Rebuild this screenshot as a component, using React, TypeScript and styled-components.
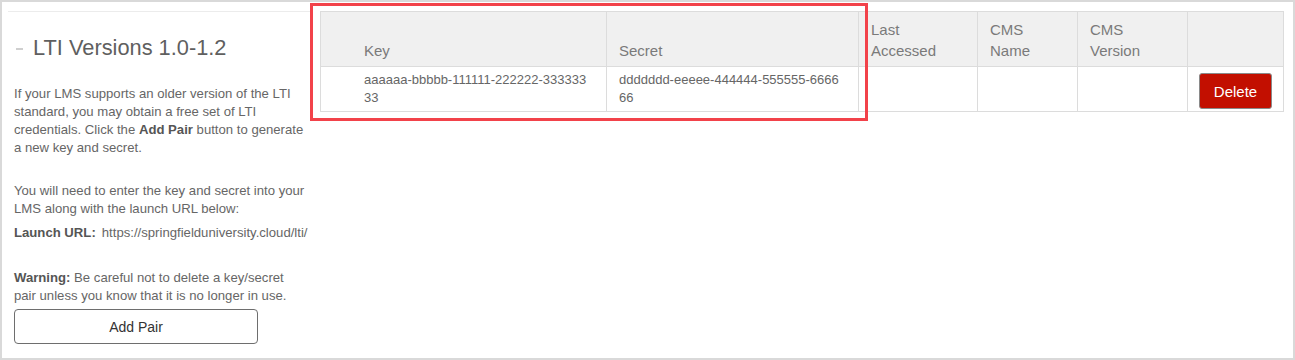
import styled, { createGlobalStyle } from "styled-components";

const GlobalStyle = createGlobalStyle`
  html, body {
    margin: 0;
    padding: 0;
    background: #ffffff;
  }
  body {
    font-family: "Liberation Sans", Arial, sans-serif;
  }
`;

const Frame = styled.div`
  position: relative;
  box-sizing: border-box;
  width: 1295px;
  height: 360px;
  border: 2px solid #d9d9d9;
  padding: 9px 9px 0 6px;
  display: flex;
  gap: 10px;
  background: #fff;
`;

const SidePanel = styled.section`
  box-sizing: border-box;
  width: 302px;
  flex: none;
  border-top: 1px solid #ececec;
  padding: 0 3px 0 6px;
  color: #666;
  font-size: 13.15px;
  line-height: 18px;
`;

const Title = styled.h2`
  margin: 24px 0 25px;
  font-size: 21.8px;
  font-weight: normal;
  line-height: 24px;
  color: #5f5f5f;
  display: flex;
  align-items: center;
`;

const Dash = styled.span`
  display: inline-block;
  width: 7px;
  height: 2px;
  background: #cfcfcf;
  margin: 2px 10px 0 2px;
`;

const Para = styled.p<{ $gap?: number }>`
  margin: 0 0 ${(p) => p.$gap ?? 0}px;
`;

const UrlRow = styled.div`
  display: flex;
  gap: 6px;
  margin-bottom: 27px;
  white-space: nowrap;
`;

const Strong = styled.b`
  color: #555;
`;

const AddButton = styled.button`
  display: block;
  box-sizing: border-box;
  width: 244px;
  height: 35px;
  margin-top: 4px;
  border: 1px solid #6e6e6e;
  border-radius: 4px;
  background: #fff;
  color: #333;
  font-family: inherit;
  font-size: 14px;
`;

const Table = styled.table`
  box-sizing: border-box;
  width: 963px;
  flex: none;
  border-collapse: collapse;
  table-layout: fixed;
  align-self: flex-start;
`;

const Head = styled.th<{ $indent?: number }>`
  background: #f0f0f0;
  border: 1px solid #dcdcdc;
  height: 49px;
  padding: 0 12px 5px ${(p) => p.$indent ?? 12}px;
  text-align: left;
  vertical-align: bottom;
  font-weight: normal;
  font-size: 15px;
  line-height: 21px;
  color: #7a7a7a;
`;

const Cell = styled.td<{ $indent?: number }>`
  border: 1px solid #dcdcdc;
  height: 36px;
  padding: 4px 16px 4px ${(p) => p.$indent ?? 12}px;
  font-size: 13px;
  line-height: 18px;
  color: #666;
  word-break: break-all;
  vertical-align: middle;
`;

const ActionCell = styled.td`
  border: 1px solid #dcdcdc;
  padding: 5px 12px 1px 11px;
  vertical-align: middle;
`;

const DeleteButton = styled.button`
  display: block;
  box-sizing: border-box;
  width: 73px;
  height: 36px;
  border: 1px solid #8a8a8a;
  border-radius: 3px;
  background: #c20f00;
  color: #fff;
  font-family: inherit;
  font-size: 15px;
`;

const Highlight = styled.div`
  position: absolute;
  left: 308px;
  top: 1px;
  width: 558px;
  height: 118px;
  box-sizing: border-box;
  border: 3px solid #f2424a;
  pointer-events: none;
`;

const columns = [
  { label: "Key", width: 286, indent: 43 },
  { label: "Secret", width: 252 },
  { label: "Last Accessed", width: 119 },
  { label: "CMS Name", width: 100 },
  { label: "CMS Version", width: 110 },
  { label: "", width: 96 },
];

const pairs = [
  {
    key: "aaaaaa-bbbbb-111111-222222-33333333",
    secret: "ddddddd-eeeee-444444-555555-666666",
  },
];

export default function App() {
  return (
    <>
      <GlobalStyle />
      <Frame>
        <SidePanel>
          <Title>
            <Dash />
            LTI Versions 1.0-1.2
          </Title>
          <Para $gap={25}>
            If your LMS supports an older version of the LTI standard, you may
            obtain a free set of LTI credentials. Click the <Strong>Add Pair</Strong>{" "}
            button to generate a new key and secret.
          </Para>
          <Para $gap={6}>
            You will need to enter the key and secret into your LMS along with
            the launch URL below:
          </Para>
          <UrlRow>
            <Strong>Launch URL:</Strong>
            <span>https://springfielduniversity.cloud/lti/</span>
          </UrlRow>
          <Para>
            <Strong>Warning:</Strong> Be careful not to delete a key/secret pair
            unless you know that it is no longer in use.
          </Para>
          <AddButton>Add Pair</AddButton>
        </SidePanel>

        <Table>
          <colgroup>
            {columns.map((c, i) => (
              <col key={i} style={{ width: c.width }} />
            ))}
          </colgroup>
          <thead>
            <tr>
              {columns.map((c, i) => (
                <Head key={i} $indent={c.indent}>
                  {c.label}
                </Head>
              ))}
            </tr>
          </thead>
          <tbody>
            {pairs.map((p) => (
              <tr key={p.key}>
                <Cell $indent={43}>{p.key}</Cell>
                <Cell>{p.secret}</Cell>
                <Cell />
                <Cell />
                <Cell />
                <ActionCell>
                  <DeleteButton>Delete</DeleteButton>
                </ActionCell>
              </tr>
            ))}
          </tbody>
        </Table>

        <Highlight />
      </Frame>
    </>
  );
}
